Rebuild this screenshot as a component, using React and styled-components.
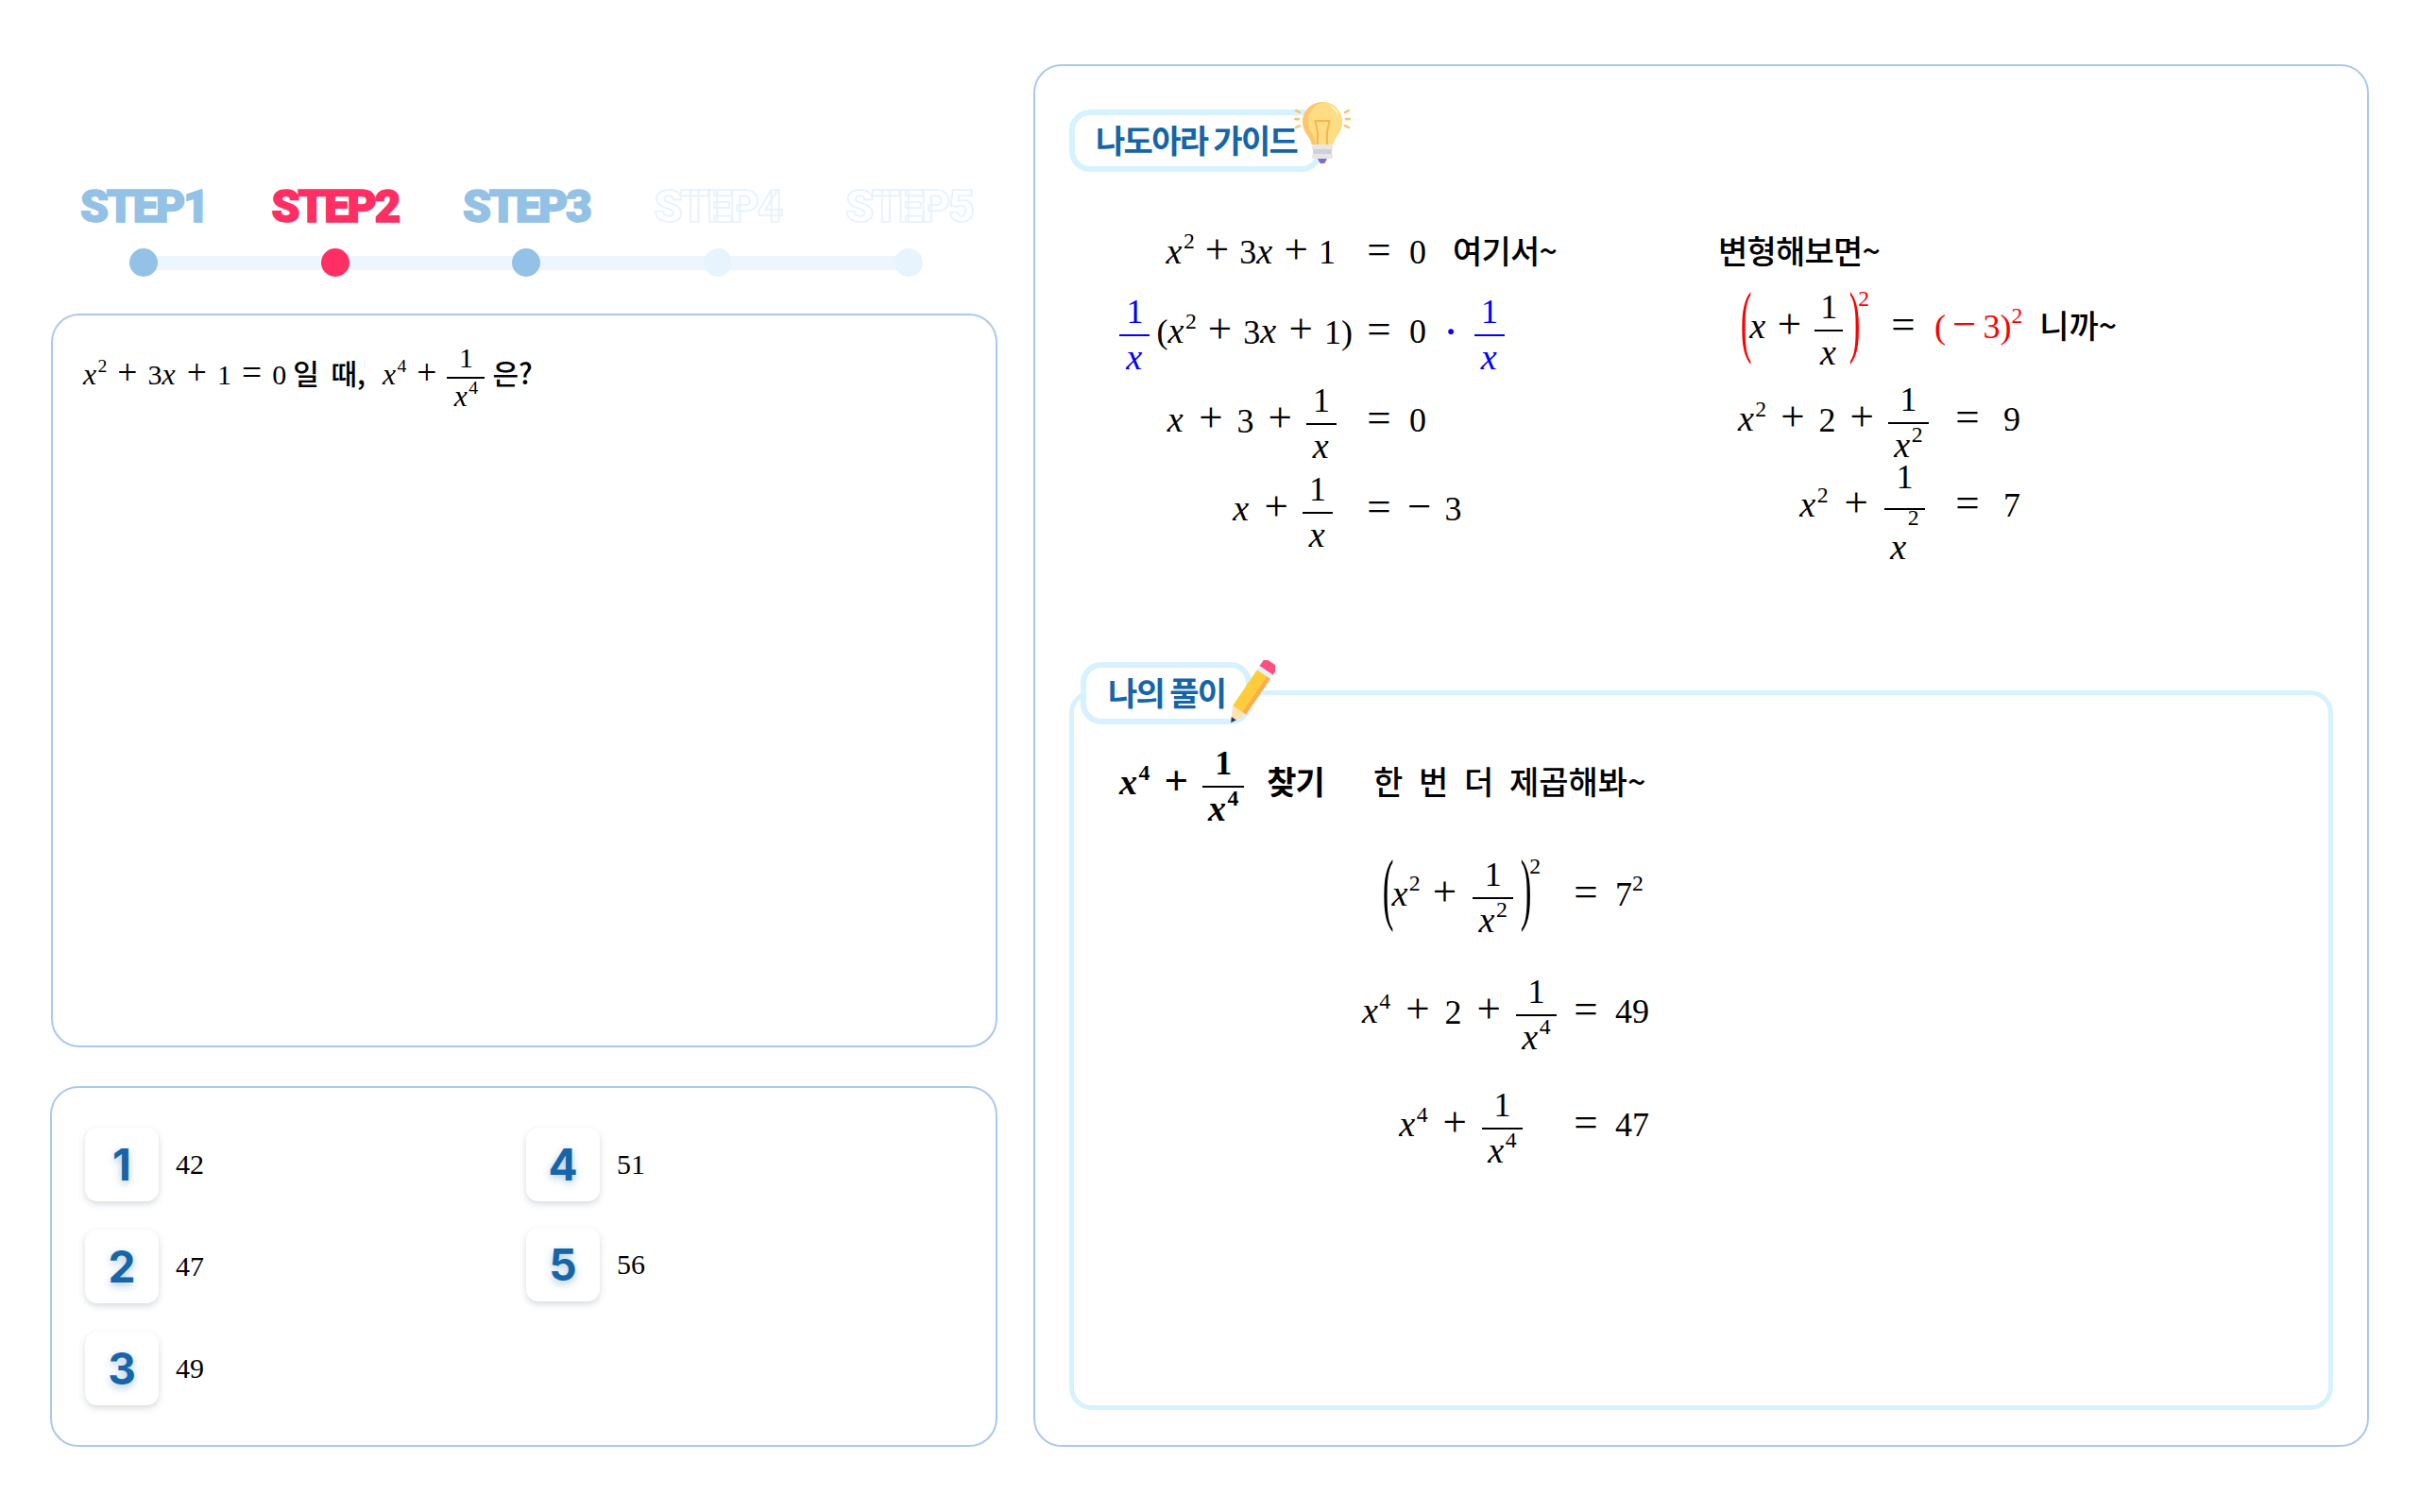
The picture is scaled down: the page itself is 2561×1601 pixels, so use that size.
import React from "react";
import styled, { createGlobalStyle } from "styled-components";

const Global = createGlobalStyle`
  html, body { margin: 0; padding: 0; background: #fff; }
  body { font-family: "Noto Sans CJK KR", "Noto Sans", sans-serif; color: #000; }
`;

const Page = styled.div`
  width: 2561px; height: 1601px; box-sizing: border-box;
  padding: 68px 53px 69px; display: flex; gap: 38px;
`;
const LeftCol = styled.div`
  width: 1003px; flex: none; display: flex; flex-direction: column; justify-content: flex-end;
`;
const Stepper = styled.div`
  position: relative; width: 1012.5px; margin: 0 0 39px -2px;
  display: grid; grid-template-columns: repeat(5, 202.5px);
`;
const Track = styled.div`
  position: absolute; left: 101px; right: 101px; bottom: 7px; height: 15px; background: #edf6fd;
`;
const Step = styled.div`
  position: relative; display: flex; flex-direction: column; align-items: center; gap: 21px;
`;
const StepLabel = styled.div`
  font-family: "Roboto", sans-serif; font-weight: 900; font-size: 48px; line-height: 46px;
  height: 46px; letter-spacing: -2.4px; white-space: nowrap;
  color: ${(p) => (p.$state === "todo" ? "#fff" : p.$state === "now" ? "#ff2e63" : "#93c2e6")};
  -webkit-text-stroke: 1.6px ${(p) => (p.$state === "todo" ? "#e6f2fb" : p.$state === "now" ? "#ff2e63" : "#93c2e6")};
`;
const Dot = styled.div`
  position: relative; width: 30px; height: 30px; border-radius: 50%;
  background: ${(p) => (p.$state === "todo" ? "#e8f4fd" : p.$state === "now" ? "#ff2e63" : "#93c2e6")};
`;
const Panel = styled.div`
  box-sizing: border-box; border: 2px solid #abc8f0; border-radius: 30px; background: #fff;
`;
const ProblemBox = styled(Panel)`
  height: 777px; margin-left: 1px; padding: 0 32px;
  margin-bottom: 41px;
`;
const AnswerBox = styled(Panel)`
  height: 382px; padding: 42px 35px; display: flex;
`;
const AnswerCol = styled.div`
  width: 467px; flex: none; display: flex; flex-direction: column; gap: ${(p) => p.$gap}px;
`;
const Answer = styled.div`
  display: flex; align-items: center; gap: 18px;
`;
const AnswerKey = styled.div`
  width: 78px; height: 78px; border-radius: 13px; background: #fff;
  box-shadow: 0 3px 7px rgba(70, 90, 110, 0.22);
  display: flex; align-items: center; justify-content: center;
  font-family: "Inter", sans-serif; font-weight: 700; font-size: 46px; color: #1565a8;
  text-shadow: 0 3px 8px rgba(21, 101, 168, 0.35);
`;
const AnswerText = styled.div`
  font-family: "Liberation Serif", serif; font-size: 30px;
`;
const RightPanel = styled(Panel)`
  flex: 1; height: 1464px; padding: 46px 36px 37px; display: flex; flex-direction: column;
`;
const Badge = styled.div`
  box-sizing: border-box; height: 66px; border: 6px solid #d6f1ff; border-radius: 22px; background: #fff;
  display: flex; align-items: center; color: #1565a8; padding-bottom: 3px;
  font-weight: 700; font-size: 34px; letter-spacing: -1.7px; white-space: nowrap;
`;
const GuideBadge = styled(Badge)`
  position: relative; width: 268px; flex: none; padding-left: 22px;
`;
const Bulb = styled.svg`
  position: absolute; left: 232px; top: -16px;
`;
const GuideBody = styled.div`
  margin-top: 58px; padding-left: 48px; display: flex;
`;
const GuideLeft = styled.div`
  width: 639px; flex: none;
`;
const GuideRight = styled.div`
  flex: 1;
`;
const MathLine = styled.div`
  display: grid; grid-auto-flow: column; justify-content: start; align-content: center; align-items: baseline;
  box-sizing: border-box; height: ${(p) => p.$h}px; padding-top: ${(p) => (p.$dy || 0) * 2}px;
  font-family: "Liberation Serif", serif; font-size: ${(p) => p.$size || 36}px; white-space: nowrap;
  font-weight: ${(p) => (p.$bold ? 700 : 400)};
`;
const Lhs = styled.div`
  width: ${(p) => p.$w}px; text-align: right;
  padding-right: ${(p) => p.$pr || 0}px; box-sizing: border-box;
`;
const Eq = styled.span`
  width: ${(p) => p.$w || 56}px; text-align: center; font-size: 1.25em; line-height: 1;
`;
const Rhs = styled.span`
  margin-left: ${(p) => p.$ml || 0}px; color: ${(p) => p.$color || "inherit"};
`;
const X = styled.i`
  font-size: 1.06em; padding-right: 0.04em; margin-left: ${(p) => p.$ml || 0}px;
`;
const Sup = styled.sup`
  font-size: 0.66em; line-height: 0; vertical-align: ${(p) => p.$raise || 0.66}em;
  color: ${(p) => p.$color || "inherit"};
`;
const Op = styled.span`
  font-size: 1.25em; line-height: 1; margin: 0 ${(p) => p.$m ?? 10}px;
`;
const Frac = styled.span`
  display: inline-grid; grid-template-rows: 1fr 2px 1fr; justify-items: center; align-items: center;
  vertical-align: middle; text-align: center;
  margin: 0 ${(p) => p.$m ?? 0}px; min-width: ${(p) => p.$w || 0}px; color: ${(p) => p.$color || "inherit"};
`;
const Num = styled.span`
  line-height: 1.15em; padding-bottom: 0.08em;
`;
const Den = styled.span`
  line-height: 1.15em; padding-top: ${(p) => p.$pt ?? 2}px;
`;
const Bar = styled.span`
  width: 100%; height: 2px; background: currentColor;
`;
const Paren = styled.span`
  display: inline-block; width: ${(p) => p.$w || 13}px; text-align: center; vertical-align: -10px;
  font-size: 84px; line-height: 1; font-weight: 400; transform: scaleX(0.42);
  color: ${(p) => p.$color || "inherit"};
`;
const Hangul = styled.span`
  font-family: "Noto Sans CJK KR", sans-serif; font-weight: ${(p) => p.$w || 500};
  font-size: ${(p) => p.$s || 34}px; letter-spacing: ${(p) => p.$ls ?? -0.8}px; margin-left: ${(p) => p.$ml || 0}px;
  word-spacing: ${(p) => p.$ws || 0}px; line-height: 1;
`;
const SolutionBox = styled.div`
  position: relative; margin-top: auto; height: 762px; box-sizing: border-box;
  border: 5px solid #d6f1ff; border-radius: 24px; padding: 29px 0 0 48px;
`;
const SolveBadge = styled(Badge)`
  position: absolute; left: 7px; top: -35px; width: 181px; padding-left: 23px;
`;
const Pencil = styled.svg`
  position: absolute; left: 150px; top: -8px;
`;

const steps = ["done", "now", "done", "todo", "todo"];
const fr = (den, pt) => (
  <>
    <Num>1</Num>
    <Bar />
    <Den $pt={pt}>{den}</Den>
  </>
);
const xn = (n, raise) => (
  <>
    <X>x</X>
    <Sup $raise={raise}>{n}</Sup>
  </>
);

function BulbIcon() {
  return (
    <Bulb width="60" height="70" viewBox="0 0 60 70">
      <g stroke="#fcc25e" strokeWidth="2.4" strokeLinecap="round">
        <path d="M2 11l4 2M1 20h4M2 29l4-2M58 11l-4 2M59 20h-4M58 29l-4-2" />
      </g>
      <path d="M30 2c-11.600 0-21 9.400-21 21 0 9 5 13 8 19 1 2 1.500 4 1.500 5h23c0-1 .5-3 1.500-5 3-6 8-10 8-19C51 11.400 41.600 2 30 2z" fill="#fec66a" />
      <path d="M33 2.300C23 3 15 11 15 23c0 9 5 13 7 19 .6 2 1 4 1 5h18.500c0-1 .5-3 1.500-5 3-6 8-10 8-19C51 12 43 3.500 33 2.300z" fill="#fedd85" />
      <path d="M40 7c3 2 5 5 6 8" stroke="#fff2c9" strokeWidth="1.600" fill="none" strokeLinecap="round" />
      <path d="M25 47V34l-2.500-12h15L35 34v13M26 22h8" stroke="#f9b54c" strokeWidth="2" fill="none" />
      <rect x="19" y="47" width="22" height="5" rx="1.500" fill="#e6e6ea" />
      <rect x="20" y="52" width="20" height="5" fill="#cfd0d6" />
      <rect x="19" y="57" width="22" height="5" rx="1.500" fill="#e6e6ea" />
      <path d="M25 62h10l-2 4c-1 1.600-5 1.600-6 0z" fill="#7e6fc4" />
    </Bulb>
  );
}

function PencilIcon() {
  return (
    <Pencil width="50" height="72" viewBox="0 0 50 72">
      <g transform="rotate(34 25 34)">
        <rect x="16.500" y="-4" width="17" height="12" rx="2.500" fill="#ff4f81" />
        <rect x="16.500" y="6" width="17" height="5" fill="#e3f2fb" />
        <rect x="16.500" y="11" width="12" height="46" fill="#ffcc3a" />
        <rect x="28.500" y="11" width="5" height="46" fill="#ffae42" />
        <path d="M16.500 57h17L25 73z" fill="#fde2b3" />
        <path d="M22 67.500h6L25 73z" fill="#2b3a4f" />
      </g>
    </Pencil>
  );
}

export default function App() {
  return (
    <Page>
      <Global />
      <LeftCol>
        <Stepper>
          <Track />
          {steps.map((s, i) => (
            <Step key={i}>
              <StepLabel $state={s}>STEP{i + 1}</StepLabel>
              <Dot $state={s} />
            </Step>
          ))}
        </Stepper>
        <ProblemBox>
          <MathLine $h={124} $size={30} $dy={4}>
            <span>
              {xn(2)}<Op $m={11}>+</Op>3<X>x</X><Op $m={11}>+</Op>1<Op $m={11}>=</Op>0
              <Hangul $s={30} $ml={7} $ls={0} $ws={6}>일 때,</Hangul>
              <X $ml={18}>x</X><Sup>4</Sup><Op $m={11}>+</Op>
              <Frac $w={40}>{fr(xn(4))}</Frac>
              <Hangul $s={30} $ml={8} $ls={0}>은?</Hangul>
            </span>
          </MathLine>
        </ProblemBox>
        <AnswerBox>
          <AnswerCol $gap={30}>
            <Answer><AnswerKey>1</AnswerKey><AnswerText>42</AnswerText></Answer>
            <Answer><AnswerKey>2</AnswerKey><AnswerText>47</AnswerText></Answer>
            <Answer><AnswerKey>3</AnswerKey><AnswerText>49</AnswerText></Answer>
          </AnswerCol>
          <AnswerCol $gap={28}>
            <Answer><AnswerKey>4</AnswerKey><AnswerText>51</AnswerText></Answer>
            <Answer><AnswerKey>5</AnswerKey><AnswerText>56</AnswerText></Answer>
          </AnswerCol>
        </AnswerBox>
      </LeftCol>
      <RightPanel>
        <GuideBadge>
          나도아라 가이드
          <BulbIcon />
        </GuideBadge>
        <GuideBody>
          <GuideLeft>
            <MathLine $h={50}>
              <Lhs $w={252} $pr={18}>{xn(2)}<Op $m={11}>+</Op>3<X>x</X><Op $m={11}>+</Op>1</Lhs>
              <Eq>=</Eq>
              <Rhs $ml={4}>0</Rhs>
              <Hangul $ml={28}>여기서~</Hangul>
            </MathLine>
            <MathLine $h={120} $dy={5}>
              <Lhs $w={252}>
                <Frac $w={32} $color="#0000ff">{fr(<X>x</X>)}</Frac>
                <Rhs $ml={7}>(</Rhs>{xn(2)}<Op $m={12}>+</Op>3<X>x</X><Op $m={12}>+</Op>1)
              </Lhs>
              <Eq>=</Eq>
              <Rhs $ml={4}>0</Rhs>
              <Rhs $ml={20} $color="#0000ff"><b>·</b></Rhs>
              <Rhs $ml={19} $color="#0000ff"><Frac $w={32}>{fr(<X>x</X>)}</Frac></Rhs>
            </MathLine>
            <MathLine $h={68} $dy={5}>
              <Lhs $w={252} $pr={17}>
                <X>x</X><Op $m={15}>+</Op>3<Op $m={15}>+</Op>
                <Frac $w={32}>{fr(<X>x</X>)}</Frac>
              </Lhs>
              <Eq>=</Eq>
              <Rhs $ml={4}>0</Rhs>
            </MathLine>
            <MathLine $h={120} $dy={5}>
              <Lhs $w={252} $pr={21}>
                <X>x</X><Op $m={15}>+</Op>
                <Frac $w={32}>{fr(<X>x</X>)}</Frac>
              </Lhs>
              <Eq>=</Eq>
              <Rhs $ml={2}><Op $m={0}>−</Op><Rhs $ml={14}>3</Rhs></Rhs>
            </MathLine>
          </GuideLeft>
          <GuideRight>
            <MathLine $h={50}><Hangul>변형해보면~</Hangul></MathLine>
            <MathLine $h={112} $dy={1}>
              <Lhs $w={166} $pr={6}>
                <Paren $color="#ff0000">(</Paren>
                <X>x</X><Op $m={11}>+</Op>
                <Frac $w={30} $m={3}>{fr(<X>x</X>)}</Frac>
                <Paren $color="#ff0000">)</Paren>
                <Sup $raise={1.45} $color="#ff0000">2</Sup>
              </Lhs>
              <Eq $w={60}>=</Eq>
              <Rhs $ml={3} $color="#ff0000">(<Op $m={7}>−</Op>3)<Sup>2</Sup></Rhs>
              <Hangul $ml={18} $ls={0}>니까~</Hangul>
            </MathLine>
            <MathLine $h={76} $dy={8}>
              <Lhs $w={234} $pr={11}>
                {xn(2)}<Op $m={15}>+</Op>2<Op $m={15}>+</Op>
                <Frac $w={43} $m={0}>{fr(xn(2))}</Frac>
              </Lhs>
              <Eq $w={60}>=</Eq>
              <Rhs $ml={8}>9</Rhs>
            </MathLine>
            <MathLine $h={102} $dy={10}>
              <Lhs $w={234} $pr={15}>
                {xn(2)}<Op $m={17}>+</Op>
                <Frac $w={43}>{fr(xn(2, 1.5), 8)}</Frac>
              </Lhs>
              <Eq $w={60}>=</Eq>
              <Rhs $ml={8}>7</Rhs>
            </MathLine>
          </GuideRight>
        </GuideBody>
        <SolutionBox>
          <SolveBadge>
            나의 풀이
            <PencilIcon />
          </SolveBadge>
          <MathLine $h={120} $bold $dy={8}>
            <span>
              {xn(4)}<Op $m={15}>+</Op>
              <Frac $w={44}>{fr(xn(4))}</Frac>
            </span>
            <Hangul $w={700} $ml={24}>찾기</Hangul>
            <Hangul $ml={52} $ls={0} $ws={9}>한 번 더 제곱해봐~</Hangul>
          </MathLine>
          <MathLine $h={120} $dy={3}>
            <Lhs $w={468} $pr={22}>
              <Paren>(</Paren>
              {xn(2)}<Op $m={13}>+</Op>
              <Frac $w={43} $m={4}>{fr(xn(2))}</Frac>
              <Paren>)</Paren>
              <Sup $raise={1.45}>2</Sup>
            </Lhs>
            <Eq $w={52}>=</Eq>
            <Rhs $ml={5}>7<Sup>2</Sup></Rhs>
          </MathLine>
          <MathLine $h={120} $dy={10}>
            <Lhs $w={468} $pr={5}>
              {xn(4)}<Op $m={16}>+</Op>2<Op $m={16}>+</Op>
              <Frac $w={43}>{fr(xn(4))}</Frac>
            </Lhs>
            <Eq $w={52}>=</Eq>
            <Rhs $ml={5}>49</Rhs>
          </MathLine>
          <MathLine $h={120} $dy={10}>
            <Lhs $w={468} $pr={41}>
              {xn(4)}<Op $m={16}>+</Op>
              <Frac $w={43}>{fr(xn(4))}</Frac>
            </Lhs>
            <Eq $w={52}>=</Eq>
            <Rhs $ml={5}>47</Rhs>
          </MathLine>
        </SolutionBox>
      </RightPanel>
    </Page>
  );
}
